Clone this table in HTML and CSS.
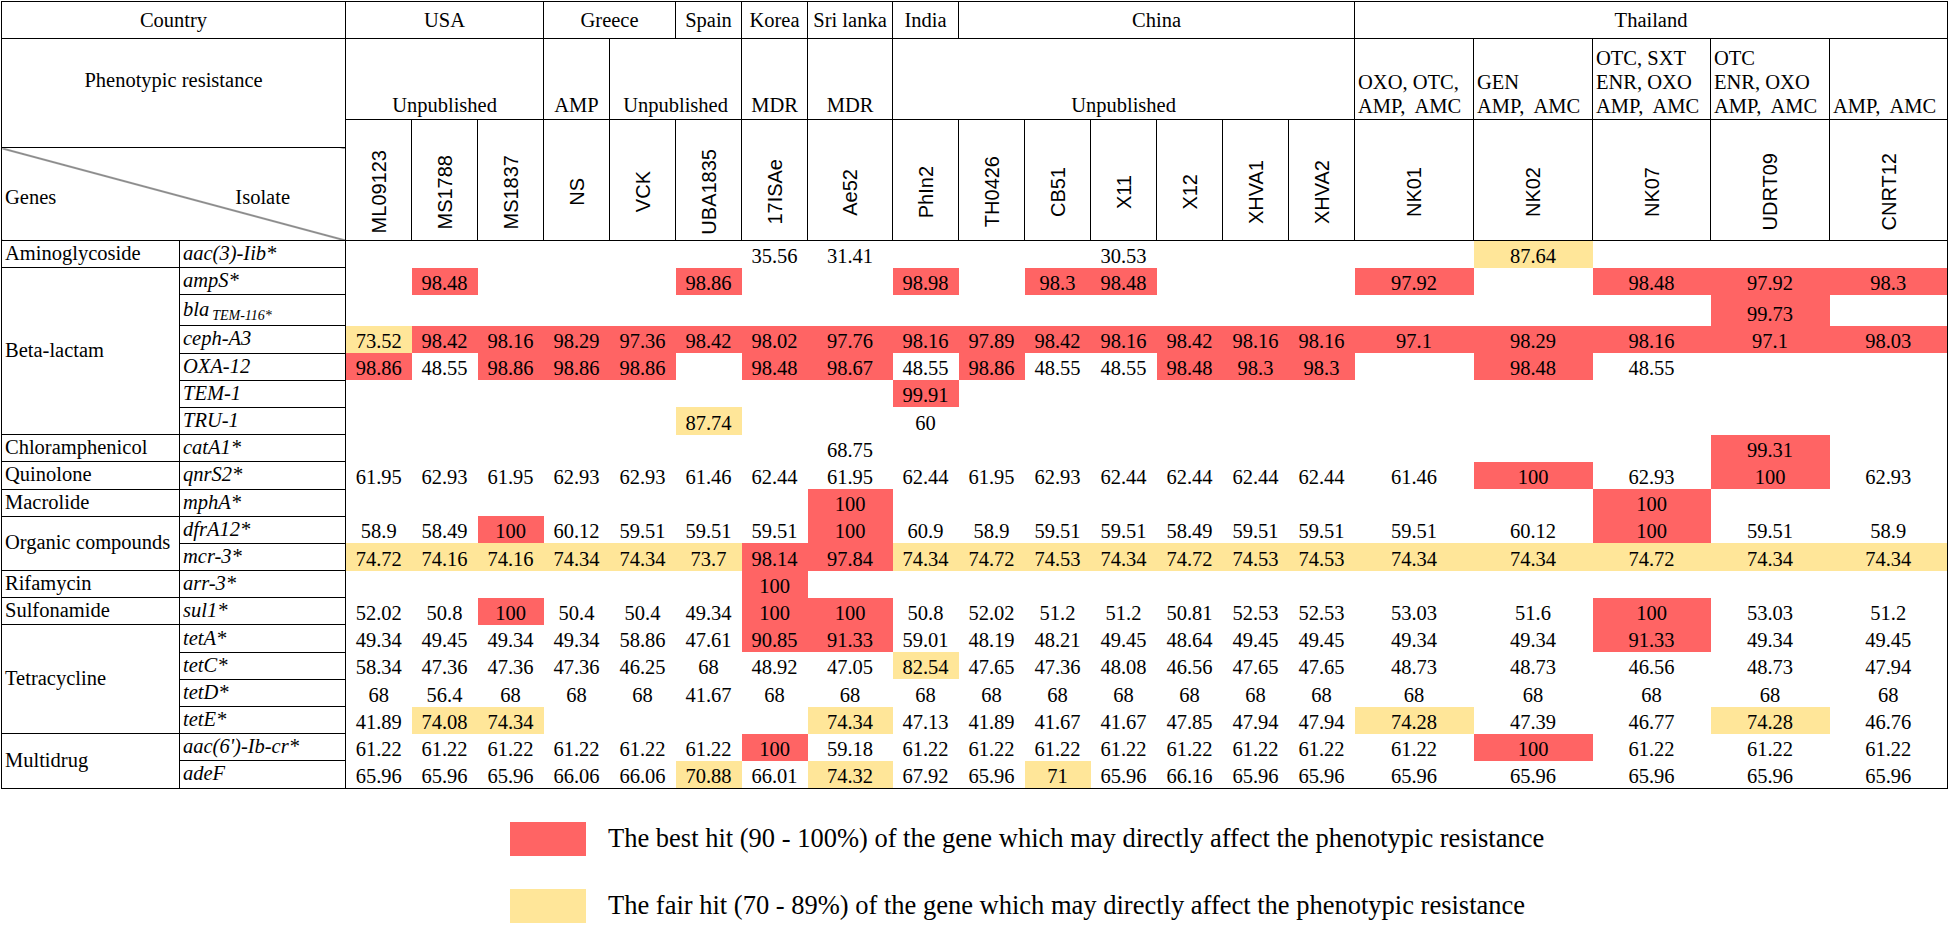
FILE: index.html
```html
<!DOCTYPE html>
<html lang="en">
<head>
    <meta charset="UTF-8">
    <meta name="viewport" content="width=device-width, initial-scale=1.0">
    <title>Resistance genes by isolate</title>
    <link rel="stylesheet" href="styles.css">
</head>
<body>
    <table class="amr">
        <colgroup>
            <col class="c-class"><col class="c-gene">
            <col class="c-iso"><col class="c-iso"><col class="c-iso"><col class="c-iso"><col class="c-iso"><col class="c-iso"><col class="c-iso">
            <col class="c-wide">
            <col class="c-iso"><col class="c-iso"><col class="c-iso"><col class="c-iso"><col class="c-iso"><col class="c-iso"><col class="c-iso">
            <col class="c-th"><col class="c-th"><col class="c-th2"><col class="c-th"><col class="c-th2">
        </colgroup>
        <thead>
            <tr class="r-country">
                <th colspan="2">Country</th>
                <th colspan="3">USA</th>
                <th colspan="2">Greece</th>
                <th>Spain</th>
                <th>Korea</th>
                <th>Sri lanka</th>
                <th>India</th>
                <th colspan="6">China</th>
                <th colspan="5">Thailand</th>
            </tr>
            <tr class="r-pheno">
                <th colspan="2" rowspan="2" class="pheno-label">Phenotypic resistance</th>
                <th colspan="3" class="pheno">Unpublished</th>
                <th class="pheno">AMP</th>
                <th colspan="2" class="pheno">Unpublished</th>
                <th class="pheno">MDR</th>
                <th class="pheno">MDR</th>
                <th colspan="7" class="pheno">Unpublished</th>
                <th class="drugs">OXO, OTC,<br>AMP,&nbsp; AMC</th>
                <th class="drugs">GEN<br>AMP,&nbsp; AMC</th>
                <th class="drugs">OTC, SXT<br>ENR, OXO<br>AMP,&nbsp; AMC</th>
                <th class="drugs">OTC<br>ENR, OXO<br>AMP,&nbsp; AMC</th>
                <th class="drugs">AMP,&nbsp; AMC</th>
            </tr>
            <tr class="r-gap">
                <th rowspan="2" class="iso"><span>ML09123</span></th>
                <th rowspan="2" class="iso"><span>MS1788</span></th>
                <th rowspan="2" class="iso"><span>MS1837</span></th>
                <th rowspan="2" class="iso"><span>NS</span></th>
                <th rowspan="2" class="iso"><span>VCK</span></th>
                <th rowspan="2" class="iso"><span>UBA1835</span></th>
                <th rowspan="2" class="iso"><span>17ISAe</span></th>
                <th rowspan="2" class="iso"><span>Ae52</span></th>
                <th rowspan="2" class="iso"><span>PhIn2</span></th>
                <th rowspan="2" class="iso"><span>TH0426</span></th>
                <th rowspan="2" class="iso"><span>CB51</span></th>
                <th rowspan="2" class="iso"><span>X11</span></th>
                <th rowspan="2" class="iso"><span>X12</span></th>
                <th rowspan="2" class="iso"><span>XHVA1</span></th>
                <th rowspan="2" class="iso"><span>XHVA2</span></th>
                <th rowspan="2" class="iso"><span>NK01</span></th>
                <th rowspan="2" class="iso"><span>NK02</span></th>
                <th rowspan="2" class="iso"><span>NK07</span></th>
                <th rowspan="2" class="iso"><span>UDRT09</span></th>
                <th rowspan="2" class="iso"><span>CNRT12</span></th>
            </tr>
            <tr class="r-genes">
                <th colspan="2" class="diag">
                    <div class="diag-labels"><span>Genes</span><span>Isolate</span></div>
                </th>
            </tr>
        </thead>
        <tbody>
            <tr>
                <td class="cls">Aminoglycoside</td>
                <td class="gene">aac(3)-Iib*</td>
                <td></td><td></td><td></td><td></td><td></td><td></td><td>35.56</td><td>31.41</td><td></td><td></td>
                <td></td><td>30.53</td><td></td><td></td><td></td><td></td><td class="y">87.64</td><td></td><td></td><td></td>
            </tr>
            <tr>
                <td class="cls" rowspan="6">Beta-lactam</td>
                <td class="gene">ampS*</td>
                <td></td><td class="r">98.48</td><td></td><td></td><td></td><td class="r">98.86</td><td></td><td></td><td class="r">98.98</td><td></td>
                <td class="r">98.3</td><td class="r">98.48</td><td></td><td></td><td></td><td class="r">97.92</td><td></td><td class="r">98.48</td><td class="r">97.92</td><td class="r">98.3</td>
            </tr>
            <tr class="tall">
                <td class="gene">bla<sub>TEM-116*</sub></td>
                <td></td><td></td><td></td><td></td><td></td><td></td><td></td><td></td><td></td><td></td>
                <td></td><td></td><td></td><td></td><td></td><td></td><td></td><td></td><td class="r">99.73</td><td></td>
            </tr>
            <tr>
                <td class="gene">ceph-A3</td>
                <td class="y">73.52</td><td class="r">98.42</td><td class="r">98.16</td><td class="r">98.29</td><td class="r">97.36</td><td class="r">98.42</td><td class="r">98.02</td><td class="r">97.76</td><td class="r">98.16</td><td class="r">97.89</td>
                <td class="r">98.42</td><td class="r">98.16</td><td class="r">98.42</td><td class="r">98.16</td><td class="r">98.16</td><td class="r">97.1</td><td class="r">98.29</td><td class="r">98.16</td><td class="r">97.1</td><td class="r">98.03</td>
            </tr>
            <tr>
                <td class="gene">OXA-12</td>
                <td class="r">98.86</td><td>48.55</td><td class="r">98.86</td><td class="r">98.86</td><td class="r">98.86</td><td></td><td class="r">98.48</td><td class="r">98.67</td><td>48.55</td><td class="r">98.86</td>
                <td>48.55</td><td>48.55</td><td class="r">98.48</td><td class="r">98.3</td><td class="r">98.3</td><td></td><td class="r">98.48</td><td>48.55</td><td></td><td></td>
            </tr>
            <tr>
                <td class="gene">TEM-1</td>
                <td></td><td></td><td></td><td></td><td></td><td></td><td></td><td></td><td class="r">99.91</td><td></td>
                <td></td><td></td><td></td><td></td><td></td><td></td><td></td><td></td><td></td><td></td>
            </tr>
            <tr>
                <td class="gene">TRU-1</td>
                <td></td><td></td><td></td><td></td><td></td><td class="y">87.74</td><td></td><td></td><td>60</td><td></td>
                <td></td><td></td><td></td><td></td><td></td><td></td><td></td><td></td><td></td><td></td>
            </tr>
            <tr>
                <td class="cls">Chloramphenicol</td>
                <td class="gene">catA1*</td>
                <td></td><td></td><td></td><td></td><td></td><td></td><td></td><td>68.75</td><td></td><td></td>
                <td></td><td></td><td></td><td></td><td></td><td></td><td></td><td></td><td class="r">99.31</td><td></td>
            </tr>
            <tr>
                <td class="cls">Quinolone</td>
                <td class="gene">qnrS2*</td>
                <td>61.95</td><td>62.93</td><td>61.95</td><td>62.93</td><td>62.93</td><td>61.46</td><td>62.44</td><td>61.95</td><td>62.44</td><td>61.95</td>
                <td>62.93</td><td>62.44</td><td>62.44</td><td>62.44</td><td>62.44</td><td>61.46</td><td class="r">100</td><td>62.93</td><td class="r">100</td><td>62.93</td>
            </tr>
            <tr>
                <td class="cls">Macrolide</td>
                <td class="gene">mphA*</td>
                <td></td><td></td><td></td><td></td><td></td><td></td><td></td><td class="r">100</td><td></td><td></td>
                <td></td><td></td><td></td><td></td><td></td><td></td><td></td><td class="r">100</td><td></td><td></td>
            </tr>
            <tr>
                <td class="cls" rowspan="2">Organic compounds</td>
                <td class="gene">dfrA12*</td>
                <td>58.9</td><td>58.49</td><td class="r">100</td><td>60.12</td><td>59.51</td><td>59.51</td><td>59.51</td><td class="r">100</td><td>60.9</td><td>58.9</td>
                <td>59.51</td><td>59.51</td><td>58.49</td><td>59.51</td><td>59.51</td><td>59.51</td><td>60.12</td><td class="r">100</td><td>59.51</td><td>58.9</td>
            </tr>
            <tr>
                <td class="gene">mcr-3*</td>
                <td class="y">74.72</td><td class="y">74.16</td><td class="y">74.16</td><td class="y">74.34</td><td class="y">74.34</td><td class="y">73.7</td><td class="r">98.14</td><td class="r">97.84</td><td class="y">74.34</td><td class="y">74.72</td>
                <td class="y">74.53</td><td class="y">74.34</td><td class="y">74.72</td><td class="y">74.53</td><td class="y">74.53</td><td class="y">74.34</td><td class="y">74.34</td><td class="y">74.72</td><td class="y">74.34</td><td class="y">74.34</td>
            </tr>
            <tr>
                <td class="cls">Rifamycin</td>
                <td class="gene">arr-3*</td>
                <td></td><td></td><td></td><td></td><td></td><td></td><td class="r">100</td><td></td><td></td><td></td>
                <td></td><td></td><td></td><td></td><td></td><td></td><td></td><td></td><td></td><td></td>
            </tr>
            <tr>
                <td class="cls">Sulfonamide</td>
                <td class="gene">sul1*</td>
                <td>52.02</td><td>50.8</td><td class="r">100</td><td>50.4</td><td>50.4</td><td>49.34</td><td class="r">100</td><td class="r">100</td><td>50.8</td><td>52.02</td>
                <td>51.2</td><td>51.2</td><td>50.81</td><td>52.53</td><td>52.53</td><td>53.03</td><td>51.6</td><td class="r">100</td><td>53.03</td><td>51.2</td>
            </tr>
            <tr>
                <td class="cls" rowspan="4">Tetracycline</td>
                <td class="gene">tetA*</td>
                <td>49.34</td><td>49.45</td><td>49.34</td><td>49.34</td><td>58.86</td><td>47.61</td><td class="r">90.85</td><td class="r">91.33</td><td>59.01</td><td>48.19</td>
                <td>48.21</td><td>49.45</td><td>48.64</td><td>49.45</td><td>49.45</td><td>49.34</td><td>49.34</td><td class="r">91.33</td><td>49.34</td><td>49.45</td>
            </tr>
            <tr>
                <td class="gene">tetC*</td>
                <td>58.34</td><td>47.36</td><td>47.36</td><td>47.36</td><td>46.25</td><td>68</td><td>48.92</td><td>47.05</td><td class="y">82.54</td><td>47.65</td>
                <td>47.36</td><td>48.08</td><td>46.56</td><td>47.65</td><td>47.65</td><td>48.73</td><td>48.73</td><td>46.56</td><td>48.73</td><td>47.94</td>
            </tr>
            <tr>
                <td class="gene">tetD*</td>
                <td>68</td><td>56.4</td><td>68</td><td>68</td><td>68</td><td>41.67</td><td>68</td><td>68</td><td>68</td><td>68</td>
                <td>68</td><td>68</td><td>68</td><td>68</td><td>68</td><td>68</td><td>68</td><td>68</td><td>68</td><td>68</td>
            </tr>
            <tr>
                <td class="gene">tetE*</td>
                <td>41.89</td><td class="y">74.08</td><td class="y">74.34</td><td></td><td></td><td></td><td></td><td class="y">74.34</td><td>47.13</td><td>41.89</td>
                <td>41.67</td><td>41.67</td><td>47.85</td><td>47.94</td><td>47.94</td><td class="y">74.28</td><td>47.39</td><td>46.77</td><td class="y">74.28</td><td>46.76</td>
            </tr>
            <tr>
                <td class="cls" rowspan="2">Multidrug</td>
                <td class="gene">aac(6')-Ib-cr*</td>
                <td>61.22</td><td>61.22</td><td>61.22</td><td>61.22</td><td>61.22</td><td>61.22</td><td class="r">100</td><td>59.18</td><td>61.22</td><td>61.22</td>
                <td>61.22</td><td>61.22</td><td>61.22</td><td>61.22</td><td>61.22</td><td>61.22</td><td class="r">100</td><td>61.22</td><td>61.22</td><td>61.22</td>
            </tr>
            <tr>
                <td class="gene">adeF</td>
                <td>65.96</td><td>65.96</td><td>65.96</td><td>66.06</td><td>66.06</td><td class="y">70.88</td><td>66.01</td><td class="y">74.32</td><td>67.92</td><td>65.96</td>
                <td class="y">71</td><td>65.96</td><td>66.16</td><td>65.96</td><td>65.96</td><td>65.96</td><td>65.96</td><td>65.96</td><td>65.96</td><td>65.96</td>
            </tr>
        </tbody>
    </table>

    <div class="legend">
        <div class="legend-item">
            <span class="swatch red"></span>
            <span>The best hit (90 - 100%) of the gene which may directly affect the phenotypic resistance</span>
        </div>
        <div class="legend-item">
            <span class="swatch yellow"></span>
            <span>The fair hit (70 - 89%) of the gene which may directly affect the phenotypic resistance</span>
        </div>
    </div>
</body>
</html>
```

FILE: styles.css
```css
body {
    margin: 0;
    padding: 1px 0 0 1px;
    background: #fff;
    color: #000;
    font-family: "Liberation Serif", "Times New Roman", serif;
}
.amr {
    border-collapse: collapse;
    table-layout: fixed;
    width: 1946px;
    border: 1px solid #000;
    font-family: "Liberation Serif", "Times New Roman", serif;
    font-size: 20.5px;
    line-height: 20px;
    color: #000;
}
.c-class { width: 178px; }
.c-gene { width: 166px; }
.c-iso { width: 66px; }
.c-wide { width: 85px; }
.c-th { width: 119px; }
.c-th2 { width: 118px; }

.amr th,
.amr td {
    padding: 0;
    font-family: "Liberation Serif", "Times New Roman", serif;
    font-weight: normal;
}
.amr thead th {
    border: 1px solid #000;
    text-align: center;
}
.r-country { height: 37px; }
.r-pheno { height: 81px; }
.r-gap { height: 28px; }
.r-genes { height: 93px; }

.amr thead .pheno {
    vertical-align: bottom;
    padding-bottom: 4px;
}
.amr thead .pheno-label {
    vertical-align: middle;
    padding-bottom: 27px;
}
.amr thead .drugs {
    vertical-align: bottom;
    text-align: left;
    line-height: 24px;
    padding: 0 0 1px 3px;
    white-space: nowrap;
}
.amr thead .iso {
    vertical-align: middle;
    padding-top: 27px;
}
.amr thead .iso span {
    display: inline-block;
    writing-mode: vertical-rl;
    transform: rotate(180deg);
    font-family: "Liberation Sans", Arial, sans-serif;
    font-size: 20px;
    line-height: 22px;
}
.amr thead .diag {
    background: linear-gradient(to top right, transparent calc(50% - 1px), #222 50%, transparent calc(50% + 1px));
}
.diag-labels {
    display: flex;
    justify-content: space-between;
    padding: 6px 55px 0 3px;
}

.amr tbody tr { height: 27.2px; }
.amr tbody tr.tall { height: 31px; }
.amr td {
    text-align: center;
    vertical-align: bottom;
    padding-bottom: 2px;
}
.amr td.cls,
.amr td.gene {
    border: 1px solid #000;
    text-align: left;
    padding: 0 0 2px 3px;
}
.amr td.cls { vertical-align: middle; }
.amr td.gene {
    font-style: italic;
    vertical-align: middle;
}
.gene sub {
    font-size: 14px;
    vertical-align: -4px;
    line-height: 0;
    margin-left: 3px;
}
.amr td.r { background: #ff6464; }
.amr td.y { background: #ffe699; }

.legend {
    display: flex;
    flex-direction: column;
    gap: 33px;
    margin: 33px 0 0 509px;
    font-size: 26.5px;
}
.legend-item {
    display: flex;
    align-items: center;
    gap: 22px;
}
.swatch {
    width: 76px;
    height: 34px;
}
.swatch.red { background: #ff6464; }
.swatch.yellow { background: #ffe699; }
```
